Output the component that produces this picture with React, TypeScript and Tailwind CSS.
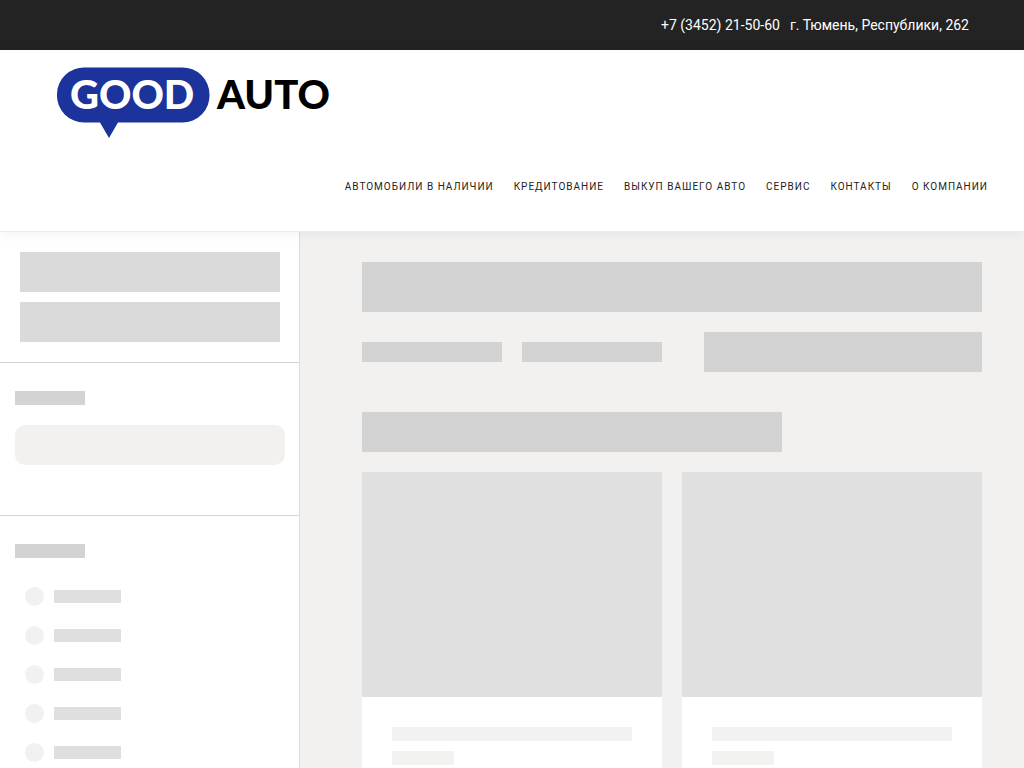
import React from "react";

const navItems = [
    "Автомобили в наличии",
    "Кредитование",
    "Выкуп вашего авто",
    "Сервис",
    "Контакты",
    "О компании",
];

const Logo: React.FC = () => {
    return (
        <svg width="276" height="72" viewBox="0 0 276 72" role="img" aria-label="Good Auto">
            <path
                d="M29 1.5H126A27 27 0 0 1 153.500 28A27 27 0 0 1 126 56.500H62L53 72L44 56.500H29A27 27 0 0 1 1 28A27 27 0 0 1 29 1.500Z"
                fill="#1c339b"
            />
            <text x="14" y="43" fontSize="40" className="font-['Lato',sans-serif] font-black" fill="#fff">GOOD</text>
            <text x="161" y="43" fontSize="40" className="font-['Lato',sans-serif] font-black" fill="#000">AUTO</text>
        </svg>
    );
};

const TopBar: React.FC = () => {
    return (
        <div className="flex h-[50px] items-center justify-end gap-[10px] bg-[#232323] pr-[55px] text-sm text-white font-['Roboto',sans-serif]">
            <a href="tel:+73452215060">+7 (3452) 21-50-60</a>
            <span>г. Тюмень, Республики, 262</span>
        </div>
    );
};

const Header: React.FC = () => {
    return (
        <header className="relative z-10 border-b border-[#ebebeb] bg-white shadow-[0_2px_12px_rgba(0,0,0,0.05)]">
            <div className="px-14 pt-4">
                <a href="#" className="inline-block align-top">
                    <Logo />
                </a>
            </div>
            <nav className="flex h-[93px] items-center justify-end gap-5 pr-9 pt-1 text-[10px] uppercase tracking-widest text-[#232323] font-['Roboto',sans-serif]">
                {navItems.map((item) => (
                    <a key={item} href="#" className="whitespace-nowrap">{item}</a>
                ))}
            </nav>
        </header>
    );
};

const Sidebar: React.FC = () => {
    return (
        <aside className="w-[300px] shrink-0 border-r border-[#dcdcdc] bg-white">
            <div className="flex flex-col gap-[10px] border-b border-[#d3d3d3] py-5 pl-5 pr-[19px]">
                <div className="h-10 bg-[#dadada]"></div>
                <div className="h-10 bg-[#dadada]"></div>
            </div>
            <div className="border-b border-[#d3d3d3] pb-[50px] pl-[15px] pr-[14px] pt-7">
                <div className="h-[14px] w-[70px] bg-[#d3d3d3]"></div>
                <div className="mt-5 h-10 rounded-[10px] bg-[#f2f1f0]"></div>
            </div>
            <div className="px-[15px] pt-7">
                <div className="h-[14px] w-[70px] bg-[#d3d3d3]"></div>
                <ul className="mt-[29px] flex flex-col gap-5 pl-[10px]">
                    {[1, 2, 3, 4, 5].map((row) => (
                        <li key={row} className="flex items-center gap-[10px]">
                            <div className="size-[19px] rounded-full bg-[#f1f1f1]"></div>
                            <div className="h-[13px] w-[67px] bg-[#dfdfdf]"></div>
                        </li>
                    ))}
                </ul>
            </div>
        </aside>
    );
};

const CarCard: React.FC = () => {
    return (
        <div className="flex flex-col bg-white">
            <div className="h-[225px] bg-[#e0e0e0]"></div>
            <div className="flex flex-col gap-[10px] px-[30px] pt-[30px]">
                <div className="h-[14px] bg-[#f2f2f1]"></div>
                <div className="h-[14px] w-[62px] bg-[#f2f2f1]"></div>
            </div>
        </div>
    );
};

const Catalog: React.FC = () => {
    return (
        <main className="flex flex-1 flex-col pl-[62px] pr-[42px] pt-[30px]">
            <div className="h-[50px] bg-[#d3d3d3]"></div>
            <div className="mt-5 flex items-center gap-5">
                <div className="h-5 w-[140px] bg-[#d3d3d3]"></div>
                <div className="h-5 w-[140px] bg-[#d3d3d3]"></div>
                <div className="ml-auto h-10 w-[278px] bg-[#d3d3d3]"></div>
            </div>
            <div className="mt-10 h-10 w-[420px] bg-[#d3d3d3]"></div>
            <div className="mt-5 grid flex-1 grid-cols-2 gap-5">
                <CarCard />
                <CarCard />
            </div>
        </main>
    );
};

const App: React.FC = () => {
    return (
        <div className="flex min-h-screen flex-col bg-[#f2f1f0]">
            <TopBar />
            <Header />
            <div className="flex flex-1">
                <Sidebar />
                <Catalog />
            </div>
        </div>
    );
};

export default App;
